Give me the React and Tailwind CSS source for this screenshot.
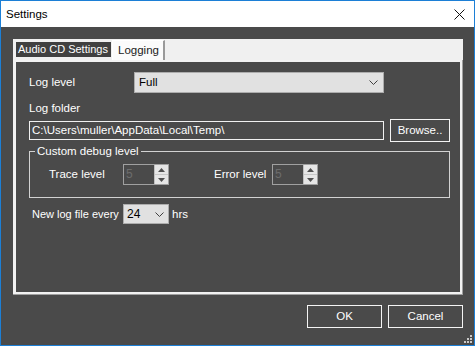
import React from "react";

function Chevron({ className = "" }) {
  return (
    <svg width="9" height="5" viewBox="0 0 9 5" className={className}>
      <polyline points="0.5,0.5 4.5,4.5 8.5,0.5" fill="none" stroke="#404040" strokeWidth="1" />
    </svg>
  );
}

function Spinner() {
  return (
    <div className="flex w-[46px] h-[21px] border border-[#a0a0a0]">
      <div className="flex-1 pl-[2px] text-[#6d6d6d] text-[12px] leading-[19px]">5</div>
      <div className="w-[14px] flex flex-col bg-[#e6e6e6] border-l border-[#c0c0c0]">
        <div className="flex-1 flex items-center justify-center border-b border-[#c8c8c8]">
          <svg width="7" height="4" viewBox="0 0 7 4">
            <polygon points="0,4 7,4 3.5,0" fill="#505050" />
          </svg>
        </div>
        <div className="flex-1 flex items-center justify-center">
          <svg width="7" height="4" viewBox="0 0 7 4">
            <polygon points="0,0 7,0 3.5,4" fill="#505050" />
          </svg>
        </div>
      </div>
    </div>
  );
}

export default function App() {
  return (
    <div
      className="w-[475px] h-[346px] border border-[#1c7fd6] flex flex-col text-[11.5px] leading-[13px] text-white"
      style={{ fontFamily: '"Liberation Sans", Arial, sans-serif' }}
    >
      {/* Title bar */}
      <div className="h-[26px] bg-white flex items-center justify-between pl-[5px] pr-[9px] text-black">
        <span className="text-[11.5px]">Settings</span>
        <svg width="11" height="11" viewBox="0 0 11 11">
          <line x1="0.5" y1="0.5" x2="10.5" y2="10.5" stroke="#111" strokeWidth="1" />
          <line x1="10.5" y1="0.5" x2="0.5" y2="10.5" stroke="#111" strokeWidth="1" />
        </svg>
      </div>

      {/* Body */}
      <div className="relative flex-1 bg-[#4a4a4a] flex flex-col pl-[12px] pr-[11px] pt-[12px]">
        {/* Tab control */}
        <div className="w-[450px] h-[256px] flex flex-col">
          <div className="h-[21px] bg-[#f0f0f0] flex items-end pl-[3px] gap-[1px]">
            <div className="h-[15px] mb-[3px] w-[95px] bg-[#404040] text-white flex items-center pl-[2px] whitespace-nowrap text-[11px]">
              Audio CD Settings
            </div>
            <div className="h-[20px] w-[53px] bg-[#fbfbfb] border-l border-t border-[#ffffff] border-r-2 border-r-[#9a9a9a] text-[#222] flex items-center pl-[5px]">
              Logging
            </div>
          </div>
          <div className="flex-1 flex flex-col border-r border-b border-[#a0a0a0]">
            <div className="flex-1 flex flex-col border-l-[3px] border-t-2 border-r-2 border-b-2 border-[#f2f2f2] bg-[#4a4a4a] pl-[13px] pt-[10px]">
              {/* Log level row */}
              <div className="flex items-center h-[21px]">
                <div className="w-[105px]">Log level</div>
                <div className="w-[250px] h-[21px] bg-[#e1e1e1] border border-[#adadad] flex items-center justify-between pl-[4px] pr-[5px] text-black">
                  <span>Full</span>
                  <Chevron />
                </div>
              </div>

              {/* Log folder */}
              <div className="mt-[9px]">Log folder</div>
              <div className="mt-[4px] flex items-center h-[23px]">
                <div className="w-[355px] h-[19px] border border-[#f0f0f0] flex items-center pl-[2px] whitespace-nowrap">
                  C:\Users\muller\AppData\Local\Temp\
                </div>
                <div className="ml-[6px] w-[60px] h-[23px] border border-[#f4f4f4] flex items-center justify-center">
                  Browse..
                </div>
              </div>

              {/* Group box */}
              <fieldset className="mt-[3px] w-[421px] border border-[#d2d2d2] p-0">
                <legend className="ml-[5px] px-[2px] leading-[13px]">Custom debug level</legend>
                <div className="flex items-center pl-[19px] pt-[6px] pb-[12px]">
                  <div className="w-[74px]">Trace level</div>
                  <Spinner />
                  <div className="ml-[45px] w-[58px]">Error level</div>
                  <Spinner />
                </div>
              </fieldset>

              {/* New log file */}
              <div className="mt-[6px] flex items-center pl-[3px]">
                <div className="w-[91px] whitespace-nowrap text-[11px]">New log file every</div>
                <div className="w-[46px] h-[20px] bg-[#e1e1e1] border border-[#adadad] flex items-center justify-between pl-[3px] pr-[4px] text-black text-[12px]">
                  <span>24</span>
                  <Chevron />
                </div>
                <div className="ml-[3px]">hrs</div>
              </div>
            </div>
          </div>
        </div>

        {/* Buttons */}
        <div className="mt-[10px] flex justify-end gap-[6px]">
          <div className="w-[75px] h-[23px] border border-[#f4f4f4] flex items-center justify-center">OK</div>
          <div className="w-[75px] h-[23px] border border-[#f4f4f4] flex items-center justify-center">Cancel</div>
        </div>

        {/* Resize grip */}
        <svg width="10" height="10" viewBox="0 0 10 10" className="absolute right-[1px] bottom-[1px]">
          <rect x="7" y="1" width="2" height="2" fill="#c8c8c8" />
          <rect x="4" y="4" width="2" height="2" fill="#c8c8c8" />
          <rect x="7" y="4" width="2" height="2" fill="#c8c8c8" />
          <rect x="1" y="7" width="2" height="2" fill="#c8c8c8" />
          <rect x="4" y="7" width="2" height="2" fill="#c8c8c8" />
          <rect x="7" y="7" width="2" height="2" fill="#c8c8c8" />
        </svg>
      </div>
    </div>
  );
}
